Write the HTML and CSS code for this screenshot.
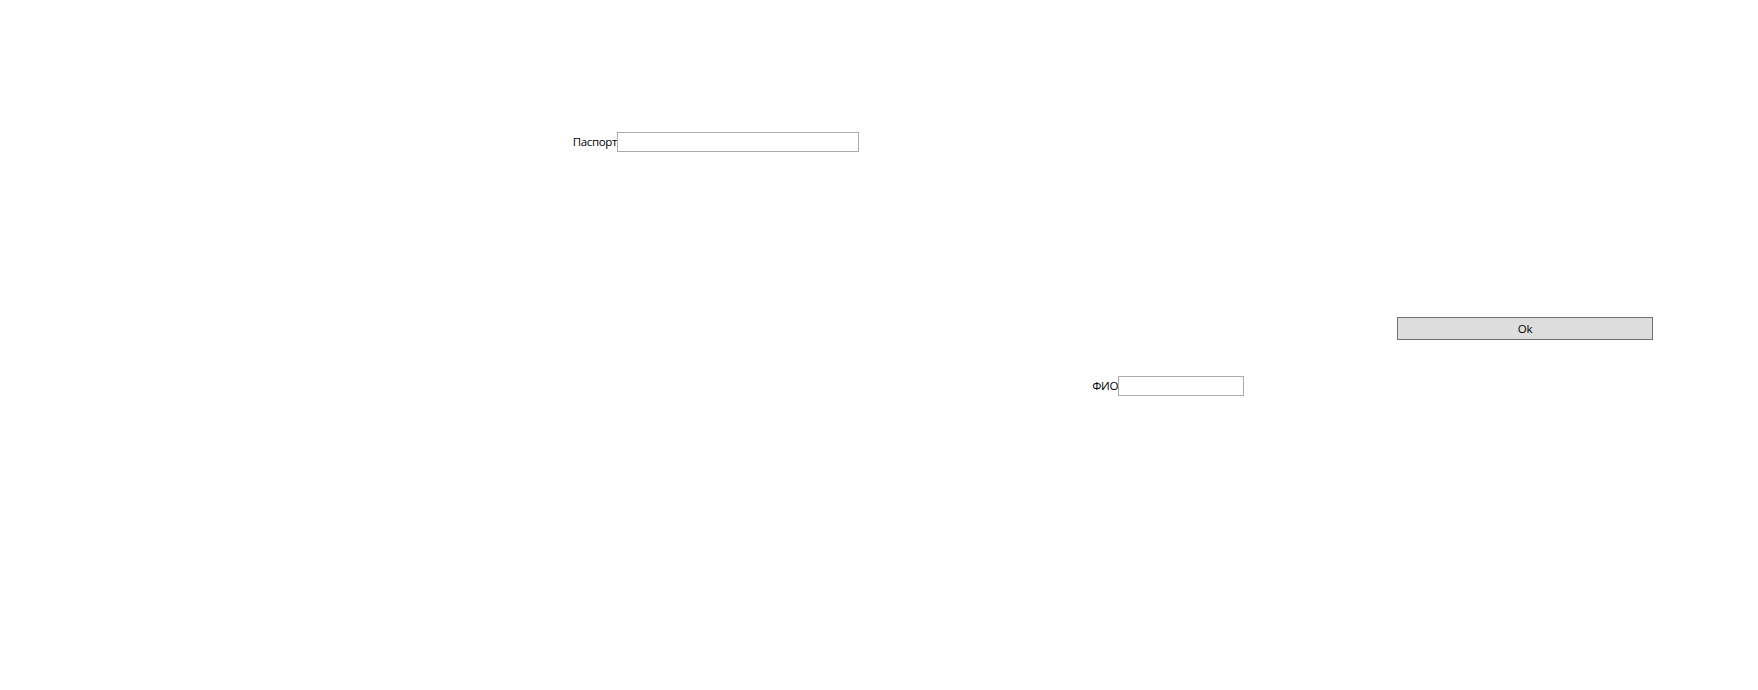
FILE: index.html
```html
<!DOCTYPE html>
<html lang="ru">
<head>
    <meta charset="UTF-8">
    <title>Форма</title>
    <link rel="stylesheet" href="styles.css">
</head>
<body>
    <div class="window">
        <div class="field passport-row">
            <label for="passport">Паспорт</label>
            <input type="text" id="passport" class="passport-input">
        </div>
        <div class="ok-row">
            <button class="ok-button">Ok</button>
        </div>
        <div class="field fio-row">
            <label for="fio">ФИО</label>
            <input type="text" id="fio" class="fio-input">
        </div>
    </div>
</body>
</html>
```

FILE: styles.css
```css
body {
    margin: 0;
    background: #fff;
    font-family: "Open Sans", "Noto Sans", sans-serif;
    font-size: 11.5px;
    color: #000;
}
.window {
    width: 1758px;
    height: 690px;
    padding-top: 132px;
    box-sizing: border-box;
}
.field {
    display: flex;
    align-items: center;
    height: 20px;
}
.field label {
    line-height: 20px;
    letter-spacing: -0.35px;
    white-space: nowrap;
    text-align: right;
}
.field input {
    box-sizing: border-box;
    height: 20px;
    margin: 0;
    padding: 0 2px;
    border: 1px solid #ababab;
    font: inherit;
    outline: none;
}
.passport-row {
    margin-left: 572px;
}
.passport-row label {
    width: 45px;
}
.passport-input {
    width: 242px;
}
.ok-row {
    margin-top: 165px;
    margin-left: 1397px;
}
.ok-button {
    display: block;
    box-sizing: border-box;
    width: 256px;
    height: 23px;
    margin: 0;
    padding: 0;
    background: #dddddd;
    border: 1px solid #707070;
    font: inherit;
    letter-spacing: -0.2px;
    color: #000;
}
.fio-row {
    margin-top: 36px;
    margin-left: 1092px;
}
.fio-row label {
    width: 26px;
}
.fio-input {
    width: 126px;
}
```
